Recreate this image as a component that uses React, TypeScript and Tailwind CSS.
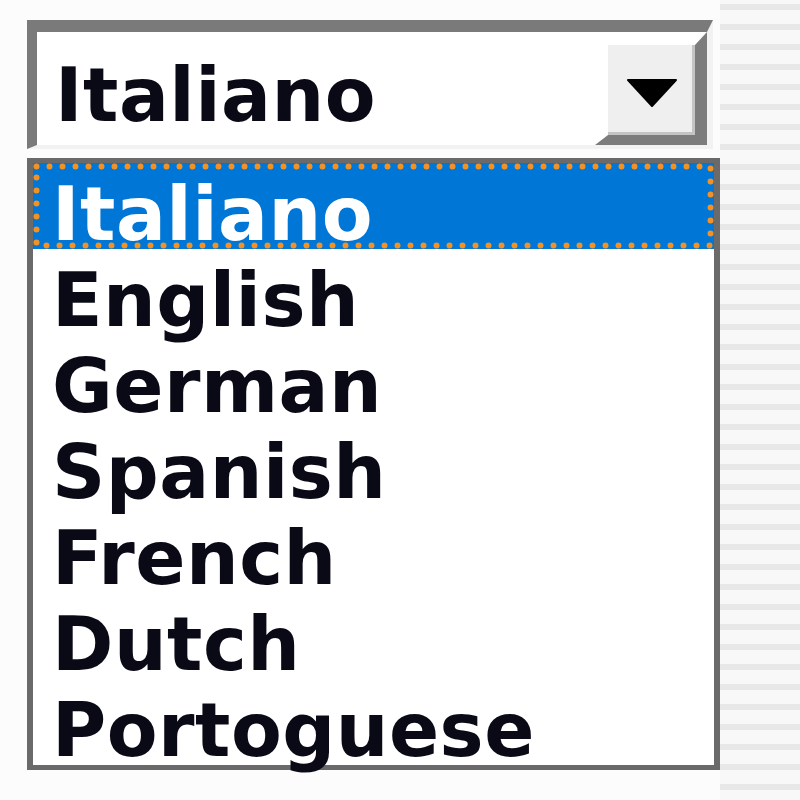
import React from "react";

const languages = ["Italiano", "English", "German", "Spanish", "French", "Dutch", "Portoguese"];

export default function App() {
  return (
    <div className="flex h-[800px] w-[800px] overflow-hidden bg-[#fbfcfb] font-['DejaVu_Sans',sans-serif] font-bold text-[74px] tracking-[0.5px] text-[#0a0a16]">
      <div className="w-[720px] shrink-0 pl-[27px] pt-[20px]">
        {/* Combo box */}
        <div className="flex h-[129px] w-[686px] border-t-[12px] border-l-[10px] border-r-[6px] border-b-[4px] border-t-[#7a7a7a] border-l-[#7a7a7a] border-r-[#f2f2f2] border-b-[#f2f2f2] bg-white">
          <div className="flex-1 pl-[18px] pt-[26px] leading-[74px]">Italiano</div>
          <div className="flex h-[113px] w-[112px] shrink-0 items-center justify-center border-t-[13px] border-l-[13px] border-r-[12px] border-b-[10px] border-t-white border-l-white border-r-[#7c7c7c] border-b-[#7c7c7c] bg-[#efefef] shadow-[inset_-3px_-3px_0_#c4c4c4]">
            <svg width="50" height="28" viewBox="0 0 50 28" className="mt-[6px]">
              <polygon points="1,1 49,1 25,27" fill="#000" stroke="#000" strokeWidth="2" strokeLinejoin="round" />
            </svg>
          </div>
        </div>
        {/* List box */}
        <div className="mt-[9px] w-[693px] border-[6px] border-t-[5px] border-b-[5px] border-[#6a6a6a] bg-white">
          {languages.map((lang, i) =>
            i === 0 ? (
              <div
                key={lang}
                className="relative h-[86px] bg-[#0076d6] pl-[19px] pt-[14px] leading-[74px] text-white"
              >
                <svg className="pointer-events-none absolute left-0 top-0" width="681" height="86">
                  <rect
                    x="3.5"
                    y="3.5"
                    width="674"
                    height="79"
                    fill="none"
                    stroke="#f39224"
                    strokeWidth="6"
                    strokeLinecap="round"
                    strokeDasharray="0 13"
                  />
                </svg>
                <span className="relative">{lang}</span>
              </div>
            ) : (
              <div key={lang} className="h-[86px] pl-[19px] pt-[14px] leading-[74px]">
                {lang}
              </div>
            )
          )}
        </div>
      </div>
      <div className="flex-1 bg-[repeating-linear-gradient(to_bottom,#f8f8f8_0px,#f8f8f8_4px,#e8e8e8_4px,#e8e8e8_10px,#f8f8f8_10px,#f8f8f8_20px)]" />
    </div>
  );
}
